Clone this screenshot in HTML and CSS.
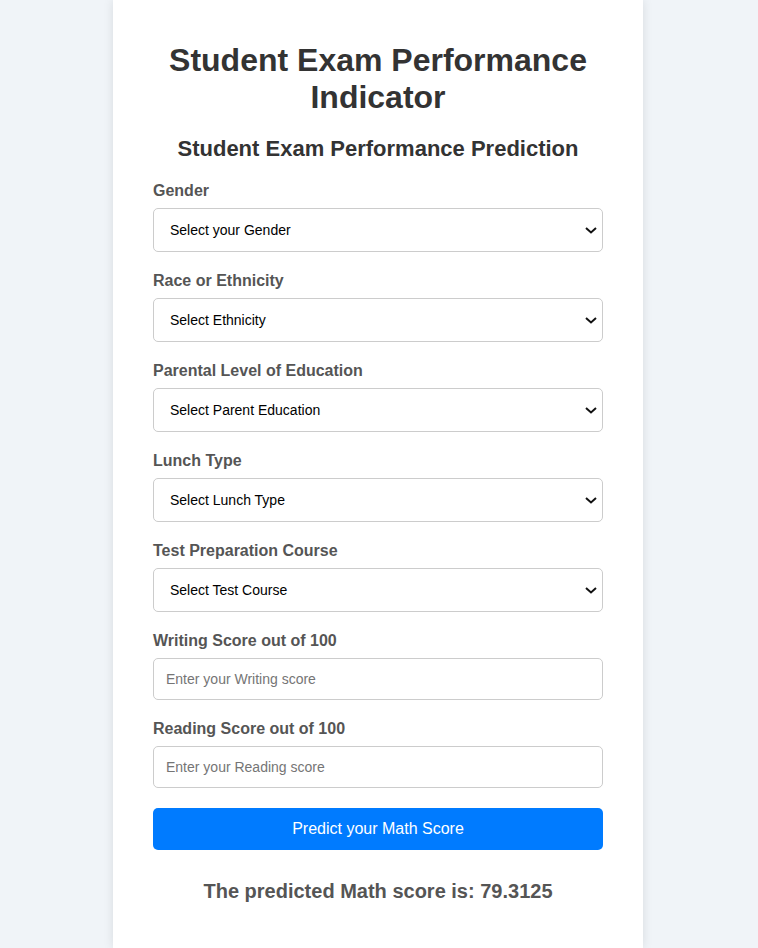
FILE: index.html
```html
<!DOCTYPE html>
<html lang="en">
<head>
<meta charset="utf-8">
<title>Student Exam Performance Indicator</title>
<link rel="stylesheet" href="styles.css">
</head>
<body>
<div class="container">
  <h1 class="title">Student Exam Performance Indicator</h1>
  <form class="form">
    <h2 class="subtitle">Student Exam Performance Prediction</h2>
    <div class="field">
      <label class="label">Gender</label>
      <div class="select-wrap">
        <select class="select"><option>Select your Gender</option></select>
        <svg class="chev" width="12" height="7" viewBox="0 0 12 7"><path d="M1 1 L6 5.5 L11 1" fill="none" stroke="#111" stroke-width="2"/></svg>
      </div>
    </div>
    <div class="field">
      <label class="label">Race or Ethnicity</label>
      <div class="select-wrap">
        <select class="select"><option>Select Ethnicity</option></select>
        <svg class="chev" width="12" height="7" viewBox="0 0 12 7"><path d="M1 1 L6 5.5 L11 1" fill="none" stroke="#111" stroke-width="2"/></svg>
      </div>
    </div>
    <div class="field">
      <label class="label">Parental Level of Education</label>
      <div class="select-wrap">
        <select class="select"><option>Select Parent Education</option></select>
        <svg class="chev" width="12" height="7" viewBox="0 0 12 7"><path d="M1 1 L6 5.5 L11 1" fill="none" stroke="#111" stroke-width="2"/></svg>
      </div>
    </div>
    <div class="field">
      <label class="label">Lunch Type</label>
      <div class="select-wrap">
        <select class="select"><option>Select Lunch Type</option></select>
        <svg class="chev" width="12" height="7" viewBox="0 0 12 7"><path d="M1 1 L6 5.5 L11 1" fill="none" stroke="#111" stroke-width="2"/></svg>
      </div>
    </div>
    <div class="field">
      <label class="label">Test Preparation Course</label>
      <div class="select-wrap">
        <select class="select"><option>Select Test Course</option></select>
        <svg class="chev" width="12" height="7" viewBox="0 0 12 7"><path d="M1 1 L6 5.5 L11 1" fill="none" stroke="#111" stroke-width="2"/></svg>
      </div>
    </div>
    <div class="field">
      <label class="label">Writing Score out of 100</label>
      <input class="input" type="number" placeholder="Enter your Writing score">
    </div>
    <div class="field">
      <label class="label">Reading Score out of 100</label>
      <input class="input" type="number" placeholder="Enter your Reading score">
    </div>
    <button class="btn" type="button">Predict your Math Score</button>
  </form>
  <h2 class="result">The predicted Math score is: 79.3125</h2>
</div>
</body>
</html>
```
FILE: styles.css
```css
html, body {
  margin: 0;
  padding: 0;
}
body {
  background: #f0f4f8;
  font-family: "Liberation Sans", Arial, sans-serif;
  padding-right: 2px;
}
.container {
  box-sizing: border-box;
  width: 530px;
  min-height: 100vh;
  margin: 0 auto;
  padding: 20px 40px 40px;
  background: #fff;
  box-shadow: 0 0 10px rgba(0, 0, 0, 0.1);
}
.title {
  margin: 21.5px 0 20.4px;
  font-size: 32px;
  font-weight: bold;
  color: #333;
  text-align: center;
}
.form {
  margin: 0;
}
.subtitle {
  margin: 0 0 20px;
  font-size: 22px;
  font-weight: bold;
  color: #333;
  text-align: center;
}
.field {
  margin-bottom: 20px;
}
.label {
  display: block;
  margin-bottom: 8px;
  font-size: 16px;
  font-weight: bold;
  color: #555;
}
.select-wrap {
  position: relative;
}
.select {
  -webkit-appearance: none;
  appearance: none;
  display: block;
  box-sizing: border-box;
  width: 100%;
  height: 44px;
  padding: 0 16px;
  border: 1px solid #ccc;
  border-radius: 5px;
  background: #fff;
  font-family: "Liberation Sans", Arial, sans-serif;
  font-size: 14px;
  color: #000;
}
.chev {
  position: absolute;
  right: 6px;
  top: 19px;
  pointer-events: none;
}
.input {
  display: block;
  box-sizing: border-box;
  width: 100%;
  height: 42px;
  padding: 0 12px;
  border: 1px solid #ccc;
  border-radius: 5px;
  font-family: "Liberation Sans", Arial, sans-serif;
  font-size: 14px;
  color: #000;
}
.input::placeholder {
  color: #757575;
}
.btn {
  display: block;
  width: 100%;
  height: 42px;
  border: none;
  border-radius: 5px;
  background: #007bff;
  color: #fff;
  font-family: "Liberation Sans", Arial, sans-serif;
  font-size: 16px;
}
.result {
  margin: 30px 0 0;
  font-size: 20px;
  font-weight: bold;
  color: #555;
  text-align: center;
}
```
